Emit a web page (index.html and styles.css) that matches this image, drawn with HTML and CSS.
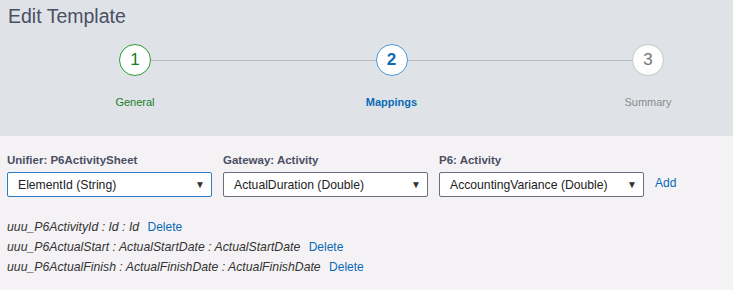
FILE: index.html
```html
<!DOCTYPE html>
<html>
<head>
  <link rel="stylesheet" href="styles.css">
</head>
<body>
  <div class="header">
    <h1 class="title">Edit Template</h1>
    <div class="steps">
      <div class="step done">
        <div class="circle">1</div>
        <div class="step_label">General</div>
      </div>
      <div class="step active">
        <div class="circle">2</div>
        <div class="step_label">Mappings</div>
      </div>
      <div class="step">
        <div class="circle">3</div>
        <div class="step_label">Summary</div>
      </div>
    </div>
  </div>

  <div class="content">
    <div class="fields">
      <div class="field">
        <label>Unifier: P6ActivitySheet</label>
        <div class="select focus"><span>ElementId (String)</span><span class="arrow">&#9660;</span></div>
      </div>
      <div class="field">
        <label>Gateway: Activity</label>
        <div class="select"><span>ActualDuration (Double)</span><span class="arrow">&#9660;</span></div>
      </div>
      <div class="field">
        <label>P6: Activity</label>
        <div class="select"><span>AccountingVariance (Double)</span><span class="arrow">&#9660;</span></div>
      </div>
      <a class="link add" href="#">Add</a>
    </div>

    <div class="mappings">
      <div class="row"><i>uuu_P6ActivityId : Id : Id</i> <a class="link" href="#">Delete</a></div>
      <div class="row"><i>uuu_P6ActualStart : ActualStartDate : ActualStartDate</i> <a class="link" href="#">Delete</a></div>
      <div class="row"><i>uuu_P6ActualFinish : ActualFinishDate : ActualFinishDate</i> <a class="link" href="#">Delete</a></div>
    </div>
  </div>
</body>
</html>
```

FILE: styles.css
```css
body, html {
  margin: 0;
  height: 100%;
  font-family: "Liberation Sans", Arial, Helvetica, sans-serif;
  background-color: #f5f2f5;
}
.header {
  background-color: #dfe3e7;
  height: 136px;
  padding: 0 8px;
  box-sizing: border-box;
}
.title {
  margin: 0;
  padding-top: 4px;
  font-size: 19.5px;
  line-height: 24px;
  font-weight: normal;
  color: #4a4f63;
}
.steps {
  position: relative;
  display: flex;
  justify-content: space-between;
  padding: 16px 37px 0 87px;
}
/* connector line behind the circles */
.steps::before {
  content: "";
  position: absolute;
  left: 135px;
  right: 84px;
  top: 32px;
  height: 1px;
  background-color: #b6b9bc;
}
.step {
  width: 80px;
  display: flex;
  flex-direction: column;
  align-items: center;
  position: relative;
}
.circle {
  width: 30px;
  height: 30px;
  border-radius: 50%;
  border: 1px solid #c9c9c9;
  background-color: #fff;
  color: #777;
  font-size: 17px;
  line-height: 30px;
  text-align: center;
}
.step_label {
  margin-top: 20px;
  font-size: 11px;
  color: #8a8a8a;
}
.done .circle {
  border-color: #2f9a35;
  color: #18801e;
}
.done .step_label {
  color: #18801e;
}
.active .circle {
  border-color: #4a98d6;
  color: #0a6ab6;
  font-weight: bold;
}
.active .step_label {
  color: #0a6ab6;
  font-weight: bold;
}
.content {
  padding: 17px 7px 0 7px;
}
.fields {
  display: flex;
  align-items: flex-end;
  gap: 11px;
}
.field {
  display: flex;
  flex-direction: column;
}
.field label {
  font-size: 11.5px;
  font-weight: bold;
  color: #4a4f63;
  line-height: 14px;
  margin-bottom: 5px;
}
.select {
  width: 205px;
  height: 25px;
  box-sizing: border-box;
  border: 1px solid #6b6f7b;
  border-radius: 2px;
  background-color: #fff;
  display: flex;
  align-items: center;
  justify-content: space-between;
  padding: 0 6px 0 10px;
  font-size: 12.2px;
  color: #222;
}
.select.focus {
  border-color: #2a7cc4;
}
.arrow {
  font-size: 10px;
  color: #333;
}
.link {
  color: #0a6ab6;
  text-decoration: none;
  font-size: 12px;
}
.add {
  margin-bottom: 7px;
}
.mappings {
  padding-top: 20px;
}
.row {
  font-size: 12.25px;
  line-height: 20px;
  color: #333;
}
.row i {
  margin-right: 5px;
}
```
